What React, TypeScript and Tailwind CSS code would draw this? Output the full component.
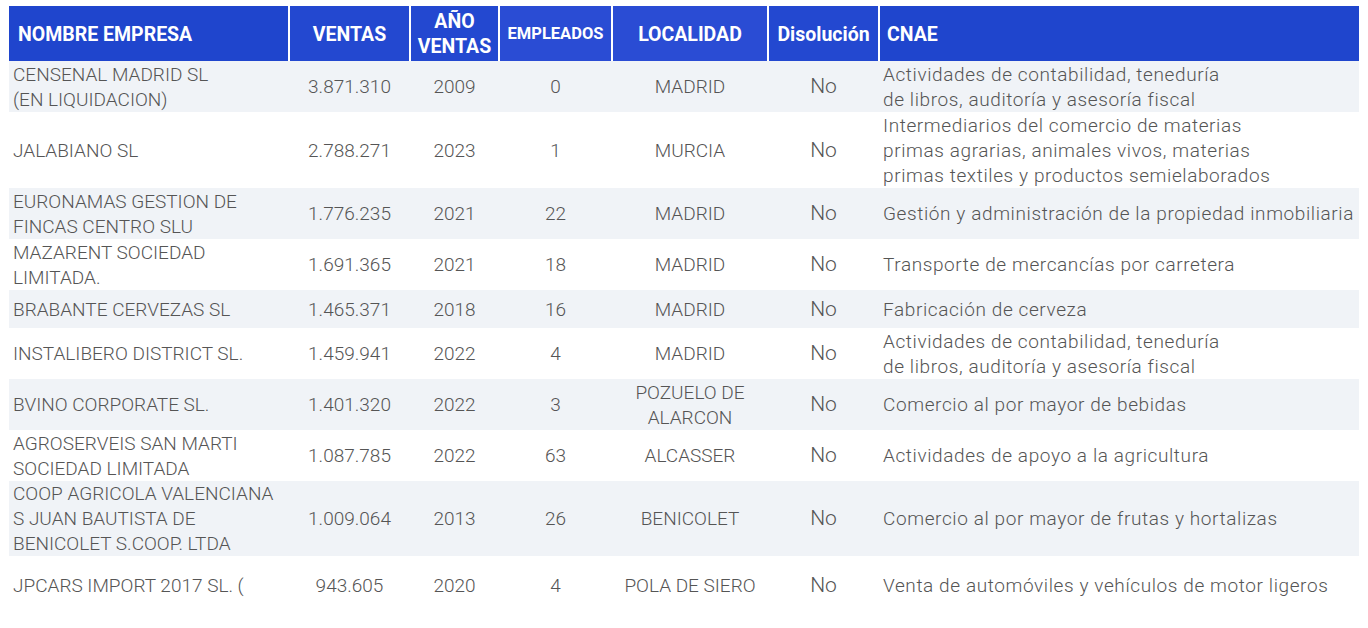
import React from "react";

type Row = {
  name: string[];
  ventas: string;
  anio: string;
  emp: string;
  loc: string[];
  dis: string;
  cnae: string[];
  h: string;
};

const rows: Row[] = [
  { name: ["CENSENAL MADRID SL", "(EN LIQUIDACION)"], ventas: "3.871.310", anio: "2009", emp: "0", loc: ["MADRID"], dis: "No", cnae: ["Actividades de contabilidad, teneduría", "de libros, auditoría y asesoría fiscal"], h: "h-[51px]" },
  { name: ["JALABIANO SL"], ventas: "2.788.271", anio: "2023", emp: "1", loc: ["MURCIA"], dis: "No", cnae: ["Intermediarios del comercio de materias", "primas agrarias, animales vivos, materias", "primas textiles y productos semielaborados"], h: "h-[76px]" },
  { name: ["EURONAMAS GESTION DE", "FINCAS CENTRO SLU"], ventas: "1.776.235", anio: "2021", emp: "22", loc: ["MADRID"], dis: "No", cnae: ["Gestión y administración de la propiedad inmobiliaria"], h: "h-[51px]" },
  { name: ["MAZARENT SOCIEDAD", "LIMITADA."], ventas: "1.691.365", anio: "2021", emp: "18", loc: ["MADRID"], dis: "No", cnae: ["Transporte de mercancías por carretera"], h: "h-[51px]" },
  { name: ["BRABANTE CERVEZAS SL"], ventas: "1.465.371", anio: "2018", emp: "16", loc: ["MADRID"], dis: "No", cnae: ["Fabricación de cerveza"], h: "h-[38px]" },
  { name: ["INSTALIBERO DISTRICT SL."], ventas: "1.459.941", anio: "2022", emp: "4", loc: ["MADRID"], dis: "No", cnae: ["Actividades de contabilidad, teneduría", "de libros, auditoría y asesoría fiscal"], h: "h-[51px]" },
  { name: ["BVINO CORPORATE SL."], ventas: "1.401.320", anio: "2022", emp: "3", loc: ["POZUELO DE", "ALARCON"], dis: "No", cnae: ["Comercio al por mayor de bebidas"], h: "h-[51px]" },
  { name: ["AGROSERVEIS SAN MARTI", "SOCIEDAD LIMITADA"], ventas: "1.087.785", anio: "2022", emp: "63", loc: ["ALCASSER"], dis: "No", cnae: ["Actividades de apoyo a la agricultura"], h: "h-[51px]" },
  { name: ["COOP AGRICOLA VALENCIANA", "S JUAN BAUTISTA DE", "BENICOLET S.COOP. LTDA"], ventas: "1.009.064", anio: "2013", emp: "26", loc: ["BENICOLET"], dis: "No", cnae: ["Comercio al por mayor de frutas y hortalizas"], h: "h-[75px]" },
  { name: ["JPCARS IMPORT 2017 SL. ("], ventas: "943.605", anio: "2020", emp: "4", loc: ["POLA DE SIERO"], dis: "No", cnae: ["Venta de automóviles y vehículos de motor ligeros"], h: "h-[58px]" },
];

function Lines({ l }: { l: string[] }) {
  return (
    <>
      {l.map((s, i) => (
        <div key={i} className="whitespace-nowrap">{s}</div>
      ))}
    </>
  );
}

export default function App() {
  return (
    <div className="bg-white w-[1368px] h-[628px] overflow-hidden pt-[6px] pl-[9px]" style={{ fontFamily: "Roboto, 'Liberation Sans', sans-serif" }}>
      <table className="border-collapse table-fixed w-[1350px]">
        <colgroup>
          <col className="w-[280px]" />
          <col className="w-[121px]" />
          <col className="w-[89px]" />
          <col className="w-[113px]" />
          <col className="w-[156px]" />
          <col className="w-[111px]" />
          <col className="w-[480px]" />
        </colgroup>
        <thead>
          <tr className="h-[55px] text-white font-bold">
            <th className="bg-[#1f45cd] text-left pl-[9px] text-[19.5px] align-middle p-0 pt-[2px] whitespace-nowrap">NOMBRE EMPRESA</th>
            <th className="bg-[#2348d0] border-l-2 border-white text-center text-[19.5px] p-0 pt-[2px]">VENTAS</th>
            <th className="bg-[#2348d0] border-l-2 border-white text-center text-[19.5px] p-0 leading-[25px]">AÑO<br />VENTAS</th>
            <th className="bg-[#2a4cd4] border-l-2 border-white text-center text-[16.5px] p-0 pt-[2px] whitespace-nowrap">EMPLEADOS</th>
            <th className="bg-[#2a4cd4] border-l-2 border-white text-center text-[19.5px] p-0 pt-[2px]">LOCALIDAD</th>
            <th className="bg-[#2348d0] border-l-2 border-white text-center text-[19.5px] p-0 pt-[2px] whitespace-nowrap">Disolución</th>
            <th className="bg-[#1f45cd] border-l-2 border-white text-left pl-[7px] text-[19.5px] p-0 pt-[2px]">CNAE</th>
          </tr>
        </thead>
        <tbody className="text-[#555555] text-[19px] leading-[25px] font-light">
          {rows.map((r, i) => (
            <tr key={i} className={`${r.h} ${i % 2 === 0 ? "bg-[#f0f3f7]" : "bg-white"}`}>
              <td className="p-0 pl-[4px] align-middle"><Lines l={r.name} /></td>
              <td className="p-0 text-center align-middle">{r.ventas}</td>
              <td className="p-0 text-center align-middle">{r.anio}</td>
              <td className="p-0 text-center align-middle">{r.emp}</td>
              <td className="p-0 text-center align-middle"><Lines l={r.loc} /></td>
              <td className="p-0 text-center align-middle text-[21px]">{r.dis}</td>
              <td className="p-0 pl-[4px] align-middle tracking-[0.6px]"><Lines l={r.cnae} /></td>
            </tr>
          ))}
        </tbody>
      </table>
    </div>
  );
}
